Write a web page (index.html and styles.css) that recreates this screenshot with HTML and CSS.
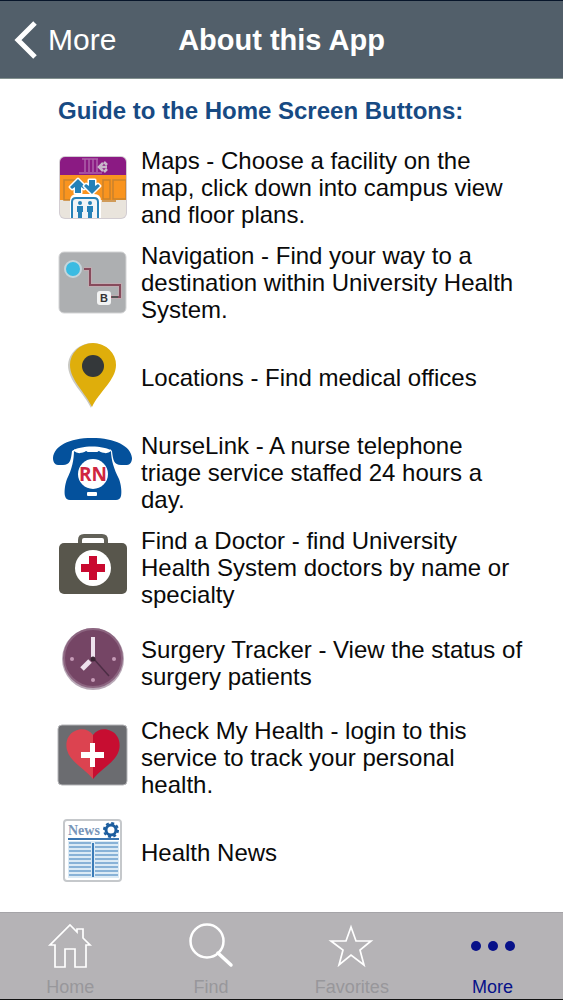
FILE: index.html
```html
<!DOCTYPE html>
<html lang="en">
<head>
<meta charset="utf-8">
<meta name="viewport" content="width=device-width, initial-scale=1">
<title>About this App</title>
<link rel="stylesheet" href="styles.css">
</head>
<body>
<div class="app">
  <header class="navbar">
    <button class="back" type="button">
      <svg class="back-icon" viewBox="0 0 24 40" aria-hidden="true"><path d="M21 3 4 20l17 17" fill="none" stroke="#fff" stroke-width="5"/></svg>
      <span>More</span>
    </button>
    <h1 class="title">About this App</h1>
  </header>

  <main class="content">
    <h2 class="heading">Guide to the Home Screen Buttons:</h2>
    <ul class="guide">
      <li class="row">
        <svg class="icon" viewBox="0 0 80 80" aria-hidden="true">
          <defs><clipPath id="map"><rect x="8" y="9" width="66" height="61" rx="5"/></clipPath></defs>
          <rect x="7" y="8" width="68" height="63" rx="6" fill="#d2cdd2"/>
          <g clip-path="url(#map)">
            <path fill="#e9e4dc" d="M8 9h66v61H8z"/>
            <path fill="#8b1a83" d="M8 9h66v18H8z"/>
            <path fill="#f9941f" d="M8 27h66v25H8z"/>
            <path fill="none" stroke="#c9822c" stroke-width="1.5" d="M12 32h15v20H12zM51 32h7v19h-7zM61 32h13v19H61zM50 53h14"/>
            <path fill="none" stroke="#ae62aa" stroke-width="1.5" d="M30 11h16M33 11v13M37 11v13M41 11v13M45 11v13M27 25h23"/>
            <path fill="none" stroke="#c8b7cb" stroke-width="2.5" d="m51 15-4 4 4 4M48 19h7M52 14l3 3M52 24l3-3"/>
            <path d="M20 71V53q0-5 5-5h17q5 0 5 5v18z" fill="#fff" stroke="#fff" stroke-width="4"/>
            <path d="M20 71V54q0-4 4-4h18q4 0 4 4v17z" fill="#f1f4f6" stroke="#2581b8" stroke-width="2"/>
            <g fill="#2581b8" stroke="#fff" stroke-width="3" paint-order="stroke" stroke-linejoin="round">
              <path d="m26 31 8 8-2 2-3-2v6h-6v-6l-3 2-2-2z"/><path d="m40 46-8-8 2-2 3 2v-6h6v6l3-2 2 2z"/>
            </g>
            <g fill="#2581b8"><circle cx="28" cy="55" r="2"/><circle cx="38" cy="55" r="2"/><path d="M25 58h6v6h-1v7h-4v-7h-1zM35 58h6v6h-1v7h-4v-7h-1z"/></g>
          </g>
        </svg>
        <p class="text">Maps - Choose a facility on the map, click down into campus view and floor plans.</p>
      </li>
      <li class="row">
        <svg class="icon" viewBox="0 0 80 80" aria-hidden="true">
          <rect x="7" y="9" width="67" height="61" rx="5" fill="#adafb1" stroke="#d3d4d5"/>
          <path d="M32 26h6v16h30v12h-9" fill="none" stroke="#c0abb1" stroke-width="4"/>
          <path d="M32 26h6v16h30v12h-9" fill="none" stroke="#874b5c" stroke-width="2"/>
          <path d="M60 54h6" stroke="#555" stroke-width="2"/>
          <circle cx="21" cy="26" r="8" fill="#3bbbe2" stroke="#c5d6dc" stroke-width="2"/>
          <rect x="45" y="48" width="14" height="14" rx="3" fill="#f2f3f3"/>
          <text class="badge-letter" x="52" y="59" text-anchor="middle">B</text>
        </svg>
        <p class="text">Navigation - Find your way to a destination within University Health System.</p>
      </li>
      <li class="row">
        <svg class="icon" viewBox="0 0 80 80" aria-hidden="true">
          <path d="M39 70C32 55 16 43 16 27a24 23 0 0 1 40-16z" fill="#c9c9c4"/>
          <path d="M40 69C33 54 18 42 18 27a23 22 0 0 1 46 0C64 42 47 54 40 69z" fill="#dfae0b"/>
          <circle cx="41" cy="28" r="11" fill="#34383a"/>
        </svg>
        <p class="text">Locations - Find medical offices</p>
      </li>
      <li class="row">
        <svg class="icon" viewBox="0 0 80 80" aria-hidden="true">
          <path d="M22 17c3 2 8 4 12 1h13c4 3 9 1 12-1 0 10 3 19 8 29 2 5 3 13 2 17q-1 4-5 4H18q-4 0-5-4c-1-4 0-12 2-17 5-10 7-19 7-29z" fill="#04519c"/>
          <path d="M1 25C2 13 17 5 40 5s39 8 40 20c0 4-2 7-5 7h-6c-7 0-8-5-9-14-8-6-32-6-40 0-1 9-2 14-9 14H6c-3 0-5-3-5-7z" fill="#04519c"/>
          <path d="M22 17c4 3 8 3 11-1l3 2h9l3-2c3 4 7 4 11 1" fill="none" stroke="#fff" stroke-width="2"/>
          <circle cx="41" cy="41" r="15" fill="#fff"/>
          <rect x="35" y="59" width="10" height="4" rx="1" fill="#fff"/>
          <text class="rn" x="41" y="48" text-anchor="middle">RN</text>
        </svg>
        <p class="text">NurseLink - A nurse telephone triage service staffed 24 hours a day.</p>
      </li>
      <li class="row">
        <svg class="icon" viewBox="0 0 80 80" aria-hidden="true">
          <path d="M28 18v-6q0-4 4-4h18q4 0 4 4v6" fill="none" stroke="#626158" stroke-width="4"/>
          <rect x="7" y="15" width="68" height="51" rx="5" fill="#58564c"/>
          <circle cx="41" cy="40" r="18" fill="#fff"/>
          <path d="M37 28h8v8h8v8h-8v8h-8v-8h-8v-8h8z" fill="#c9092f"/>
        </svg>
        <p class="text">Find a Doctor - find University Health System doctors by name or specialty</p>
      </li>
      <li class="row">
        <svg class="icon" viewBox="0 0 80 80" aria-hidden="true">
          <circle cx="41" cy="36" r="31" fill="#b9a9b7"/>
          <circle cx="41" cy="35" r="29" fill="#754565" stroke="#8c6580" stroke-width="2"/>
          <path d="m41 35 16 18" stroke="#4c2d44" stroke-width="1.5"/>
          <path d="M41 35V14" stroke="#eee2ed" stroke-width="4"/>
          <path d="m38 38-8 8" stroke="#eee2ed" stroke-width="5"/>
          <circle cx="41" cy="36" r="2.5" fill="#3a2534"/>
          <g fill="#c69bb7"><circle cx="20" cy="36" r="2"/><circle cx="62" cy="36" r="2"/><circle cx="41" cy="57" r="2"/></g>
        </svg>
        <p class="text">Surgery Tracker - View the status of surgery patients</p>
      </li>
      <li class="row">
        <svg class="icon" viewBox="0 0 80 80" aria-hidden="true">
          <rect x="6" y="7" width="69" height="60" rx="4" fill="#6b6c70" stroke="#b5b5b8"/>
          <path d="M41 17C37 11 29 10 23 13c-7 3-10 11-8 19 3 12 17 18 26 29z" fill="#dc4350"/>
          <path d="M41 17c4-6 12-7 18-4 7 3 10 11 8 19-3 12-17 18-26 29z" fill="#c70d31"/>
          <path d="M38 25h5v9h9v6h-9v9h-5v-9h-9v-6h9z" fill="#fff"/>
        </svg>
        <p class="text">Check My Health - login to this service to track your personal health.</p>
      </li>
      <li class="row">
        <svg class="icon" viewBox="0 0 80 80" aria-hidden="true">
          <rect x="12" y="7" width="57" height="61" rx="3" fill="#fff" stroke="#c5c8cb" stroke-width="2"/>
          <path d="M16 26h51" stroke="#3a75b0" stroke-width="2"/>
          <path d="M16 28h51v37H16z" fill="#dbeaf5"/>
          <path d="M17 30h22M43 30h23M17 34h22M43 34h23M17 38h22M43 38h23M17 42h22M43 42h23M17 46h22M43 46h23M17 50h22M43 50h23M17 54h22M43 54h23M17 58h22M43 58h23M17 62h22M43 62h23" stroke="#6ea0cd" stroke-width="1.5"/>
          <path d="M41 30v34" stroke="#3a7bb8" stroke-width="2"/>
          <circle cx="59" cy="17" r="5" fill="none" stroke="#1c5d9e" stroke-width="3"/>
          <circle cx="59" cy="17" r="7" fill="none" stroke="#1c5d9e" stroke-width="2" stroke-dasharray="3 2.5"/>
          <text class="news" x="16" y="22">News</text>
        </svg>
        <p class="text">Health News</p>
      </li>
    </ul>
  </main>

  <nav class="tabbar">
    <button class="tab" type="button">
      <svg class="tab-icon" viewBox="0 0 48 48" aria-hidden="true"><path d="M9 45V23H4L24 3l7 7V7h6v9l7 7h-4v22H29V27H19v18z" fill="none" stroke="#fff" stroke-width="1.7"/></svg>
      <span>Home</span>
    </button>
    <button class="tab" type="button">
      <svg class="tab-icon" viewBox="0 0 48 48" aria-hidden="true"><circle cx="20" cy="19" r="16.5" fill="none" stroke="#fff" stroke-width="2.5"/><path d="m31 31 13 12" fill="none" stroke="#fff" stroke-width="3.5" stroke-linecap="round"/></svg>
      <span>Find</span>
    </button>
    <button class="tab" type="button">
      <svg class="tab-icon" viewBox="0 0 48 48" aria-hidden="true"><path d="m23 5 5 14h15L32 28l4 15-13-10-12 10 4-15L3 19h15z" fill="none" stroke="#fff" stroke-width="1.7"/></svg>
      <span>Favorites</span>
    </button>
    <button class="tab active" type="button" aria-current="page">
      <svg class="tab-icon" viewBox="0 0 48 48" aria-hidden="true"><g fill="#071189"><circle cx="7" cy="24" r="5"/><circle cx="24" cy="24" r="5"/><circle cx="41" cy="24" r="5"/></g></svg>
      <span>More</span>
    </button>
  </nav>
</div>
</body>
</html>
```
FILE: styles.css
```css
* {
  box-sizing: border-box;
}

body {
  margin: 0;
  font-family: "Liberation Sans", Arial, sans-serif;
  color: #0a0a0a;
  background: #fff;
}

button {
  border: 0;
  padding: 0;
  background: none;
  font: inherit;
  color: inherit;
}

.app {
  display: flex;
  flex-direction: column;
  min-height: 100vh;
}

.navbar {
  display: grid;
  grid-template-columns: 1fr auto 1fr;
  align-items: center;
  height: 79px;
  padding: 0 14px;
  border-top: 1px solid #07152a;
  border-bottom: 1px solid #83918f;
  background: #525f6a;
  color: #fff;
}

.back {
  display: flex;
  align-items: center;
  gap: 10px;
  justify-self: start;
  font-size: 30px;
  line-height: 40px;
}

.back-icon {
  width: 24px;
  height: 40px;
}

.title {
  margin: 0;
  font-size: 29px;
  line-height: 40px;
}

.content {
  flex: 1;
  padding: 16px 40px 16px 52px;
}

.heading {
  margin: 0 0 20px 6px;
  font-size: 24px;
  line-height: 32px;
  color: #174a83;
}

.guide {
  display: flex;
  flex-direction: column;
  gap: 14px;
  margin: 0;
  padding: 0;
  list-style: none;
}

.row {
  display: flex;
  align-items: center;
  gap: 9px;
  min-height: 81px;
}

.icon {
  flex: none;
  width: 80px;
  height: 80px;
}

.text {
  margin: 0;
  font-size: 24px;
  line-height: 27px;
}

.badge-letter {
  font-size: 11px;
  font-weight: bold;
  fill: #333;
}

.rn {
  font-family: "Open Sans", sans-serif;
  font-size: 19px;
  font-weight: bold;
  fill: #cf2640;
}

.news {
  font-family: "Liberation Serif", serif;
  font-size: 14px;
  font-weight: bold;
  fill: #7895b8;
}

.tabbar {
  display: grid;
  grid-template-columns: repeat(4, 1fr);
  height: 88px;
  border-top: 1px solid #a5a4a8;
  border-bottom: 1px solid #111;
  background: #b5b3b6;
}

.tab {
  display: flex;
  flex-direction: column;
  align-items: center;
  justify-content: flex-end;
  font-size: 18px;
  line-height: 24px;
  color: #98979b;
}

.tab-icon {
  width: 48px;
  height: 48px;
  margin-bottom: 5px;
}

.active {
  color: #071189;
}
```
